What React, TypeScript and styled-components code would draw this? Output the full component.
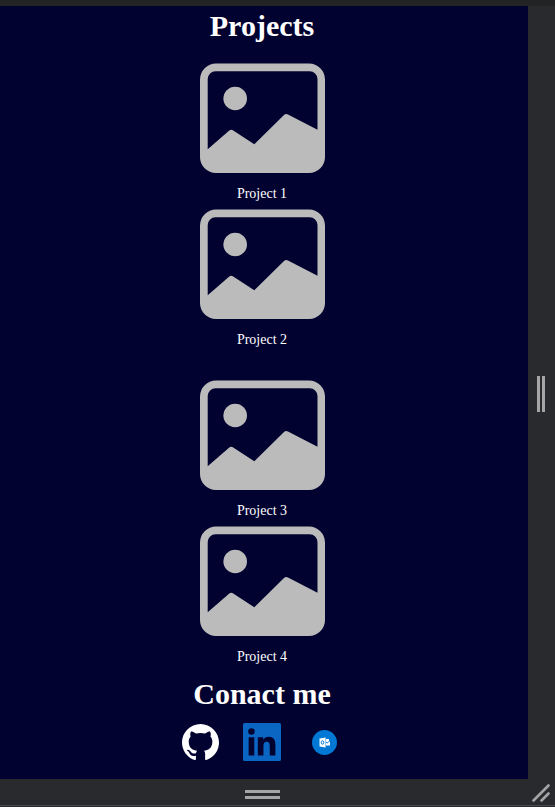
import React from "react";
import styled, { createGlobalStyle } from "styled-components";

const GlobalStyle = createGlobalStyle`
  body {
    margin: 0;
    background: #292a2d;
  }
`;

const Frame = styled.div`
  display: grid;
  grid-template-columns: 1fr 27px;
  grid-template-rows: 6px auto 27px;
  min-height: 100vh;
  box-sizing: border-box;
  padding-bottom: 1px;
  background: #292a2d;
  font-family: "Liberation Serif", "Times New Roman", serif;
`;

const TopStrip = styled.div`
  grid-column: 1 / -1;
  background: #222324;
`;

const Page = styled.main`
  display: flex;
  flex-direction: column;
  align-items: center;
  padding: 3px 4px 18px 0;
  background: #020230;
  color: #ffffff;
`;

const Heading = styled.h2`
  margin: 0;
  font-size: 30px;
  line-height: 34px;
  font-weight: 700;
`;

const Projects = styled.section`
  display: flex;
  flex-direction: column;
  align-items: center;
  gap: 20px;
  margin-bottom: 12px;
`;

const Groups = styled.div`
  display: flex;
  flex-direction: column;
  gap: 32px;
`;

const Group = styled.div`
  display: flex;
  flex-direction: column;
  gap: 7px;
`;

const Card = styled.figure`
  display: flex;
  flex-direction: column;
  align-items: center;
  gap: 13px;
  margin: 0;
`;

const Picture = styled.svg`
  display: block;
  width: 125px;
  height: 110px;
`;

const Caption = styled.figcaption`
  font-size: 14px;
  line-height: 16px;
`;

const Contact = styled.section`
  display: flex;
  flex-direction: column;
  align-items: center;
  gap: 12px;
`;

const Links = styled.nav`
  display: flex;
  gap: 24px;
`;

const IconLink = styled.a`
  display: flex;
  align-items: center;
  justify-content: center;
  width: 38px;
  height: 38px;
`;

const Icon = styled.svg<{ $size: number }>`
  display: block;
  width: ${(p) => p.$size}px;
  height: ${(p) => p.$size}px;
`;

const Handle = styled.button<{ $vertical?: boolean }>`
  display: flex;
  flex-direction: ${(p) => (p.$vertical ? "row" : "column")};
  align-items: center;
  justify-content: center;
  gap: ${(p) => (p.$vertical ? 2 : 3)}px;
  padding: ${(p) => (p.$vertical ? "2px 2px 0 0" : "4px 3px 0 0")};
  border: 0;
  border-bottom: ${(p) => (p.$vertical ? "0" : "1px solid #48494c")};
  background: #292a2d;
  cursor: ${(p) => (p.$vertical ? "ew-resize" : "ns-resize")};
`;

const Grip = styled.span<{ $vertical?: boolean }>`
  width: ${(p) => (p.$vertical ? 3 : 35)}px;
  height: ${(p) => (p.$vertical ? 36 : 3)}px;
  background: #a5a5a5;
`;

const Corner = styled.button`
  display: flex;
  align-items: flex-end;
  justify-content: flex-end;
  padding: 0 5px 3px 0;
  border: 0;
  border-bottom: 1px solid #48494c;
  background: #292a2d;
  cursor: nwse-resize;
`;

const GITHUB =
  "M8 0C3.58 0 0 3.58 0 8c0 3.54 2.29 6.53 5.47 7.59.4.07.55-.17.55-.38 0-.19-.01-.82-.01-1.49-2.01.37-2.53-.49-2.69-.94-.09-.23-.48-.94-.82-1.13-.28-.15-.68-.52-.01-.53.63-.01 1.08.58 1.23.82.72 1.21 1.87.87 2.33.66.07-.52.28-.87.51-1.07-1.78-.2-3.64-.89-3.64-3.95 0-.87.31-1.59.82-2.15-.08-.2-.36-1.02.08-2.12 0 0 .67-.21 2.2.82.64-.18 1.32-.27 2-.27.68 0 1.36.09 2 .27 1.53-1.04 2.2-.82 2.2-.82.44 1.1.16 1.92.08 2.12.51.56.82 1.27.82 2.15 0 3.07-1.87 3.75-3.65 3.95.29.25.54.73.54 1.48 0 1.07-.01 1.93-.01 2.2 0 .21.15.46.55.38A8.013 8.013 0 0016 8c0-4.42-3.58-8-8-8z";

const LINKEDIN =
  "M20.447 20.452h-3.554v-5.569c0-1.328-.027-3.037-1.852-3.037-1.853 0-2.136 1.445-2.136 2.939v5.667H9.351V9h3.414v1.561h.046c.477-.9 1.637-1.85 3.37-1.85 3.601 0 4.267 2.37 4.267 5.455v6.286zM5.337 7.433a2.062 2.062 0 01-2.063-2.065 2.064 2.064 0 112.063 2.065zm1.782 13.019H3.555V9h3.564v11.452zM23 0H1A1 1 0 0 0 0 1V23A1 1 0 0 0 1 24H23A1 1 0 0 0 24 23V1A1 1 0 0 0 23 0z";

const groups = [
  ["Project 1", "Project 2"],
  ["Project 3", "Project 4"],
];

function Placeholder() {
  return (
    <Picture viewBox="0 0 125 110" aria-hidden="true">
      <path
        fill="#bbbbbb"
        fillRule="evenodd"
        d="M16 .5H109A16 16 0 0 1 125 16.500V94A16 16 0 0 1 109 110H16A16 16 0 0 1 0 94V16.500A16 16 0 0 1 16 .5ZM15.500 8.300A8 8 0 0 0 7.700 16V86.300L29 67.700Q31 66 33.200 67.500L54.300 81.300L84 52Q85.800 50.300 88 51.500L117.500 66.700V16A8 8 0 0 0 109.700 8.300Z"
      />
      <circle cx="35.200" cy="35.500" r="11.800" fill="#bbbbbb" />
    </Picture>
  );
}

export default function App() {
  return (
    <>
      <GlobalStyle />
      <Frame>
        <TopStrip />
        <Page>
          <Projects>
            <Heading>Projects</Heading>
            <Groups>
              {groups.map((names) => (
                <Group key={names[0]}>
                  {names.map((name) => (
                    <Card key={name}>
                      <Placeholder />
                      <Caption>{name}</Caption>
                    </Card>
                  ))}
                </Group>
              ))}
            </Groups>
          </Projects>
          <Contact>
            <Heading>Conact me</Heading>
            <Links aria-label="Contact">
              <IconLink href="#github" aria-label="GitHub">
                <Icon $size={37} viewBox="0 0 16 16">
                  <path fill="#ffffff" d={GITHUB} />
                </Icon>
              </IconLink>
              <IconLink href="#linkedin" aria-label="LinkedIn">
                <Icon $size={38} viewBox="0 0 24 24">
                  <path fill="#0a66c2" fillRule="evenodd" d={LINKEDIN} />
                </Icon>
              </IconLink>
              <IconLink href="#outlook" aria-label="Outlook">
                <Icon $size={25} viewBox="0 0 25 25">
                  <circle cx="12.500" cy="12.500" r="12.500" fill="#0078d4" />
                  <path fill="#ffffff" d="M7.500 8.600L13.600 7.500V17.500L7.500 16.400Z" />
                  <ellipse cx="10.500" cy="12.500" rx="1.300" ry="1.700" fill="none" stroke="#0078d4" strokeWidth="1" />
                  <path fill="#ffffff" d="M14 9H17V11.200L15.200 12.600L14 11.800ZM14 12.800L15.200 13.500L18 11.300V15.500H14Z" />
                </Icon>
              </IconLink>
            </Links>
          </Contact>
        </Page>
        <Handle $vertical type="button" aria-label="Resize width">
          <Grip $vertical />
          <Grip $vertical />
        </Handle>
        <Handle type="button" aria-label="Resize height">
          <Grip />
          <Grip />
        </Handle>
        <Corner type="button" aria-label="Resize">
          <Icon $size={18} viewBox="0 0 18 18">
            <path d="M1.500 16.500L16.500 1.500M9.500 16.500L16.500 9.500" stroke="#a5a5a5" strokeWidth="2.600" strokeLinecap="round" />
          </Icon>
        </Corner>
      </Frame>
    </>
  );
}
